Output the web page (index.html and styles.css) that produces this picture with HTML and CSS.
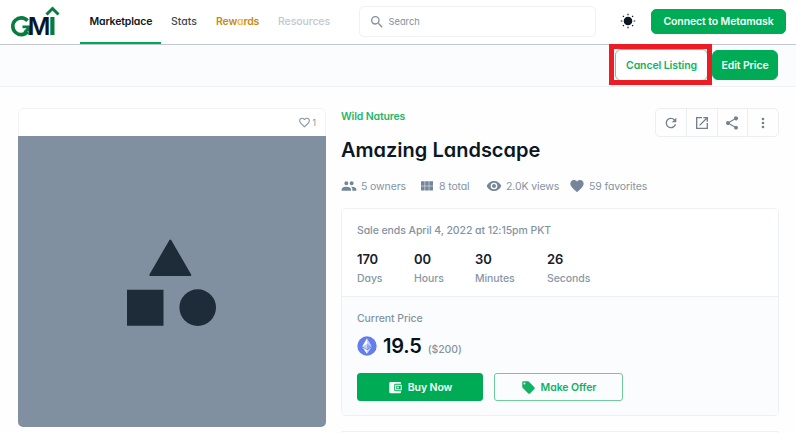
FILE: index.html
```html
<!DOCTYPE html>
<html lang="en">
<head>
<meta charset="utf-8">
<title>Amazing Landscape</title>
<link rel="stylesheet" href="styles.css">
</head>
<body>
<header class="topbar">
  <svg class="logo" width="50" height="34" viewBox="0 0 50 34">
    <path class="logo-ring" d="M16.500 14.700A8.400 8.400 0 1 0 16.500 25.800"/>
    <path class="logo-fill" d="M11.500 19.500h9v9.500h-3.200v-4l-3.300 2.500-1.500-2.200 3.200-3h-4.200z"/>
    <text class="logo-dark" x="16.800" y="29" textLength="22.700" lengthAdjust="spacingAndGlyphs">M</text>
    <path class="logo-fill" d="M39.300 11h4.200v18h-4.200z"/>
    <path class="logo-stroke" d="M35.500 8.500 41.500 2.500l6 6"/>
  </svg>
  <nav class="nav">
    <a class="nav-item active"><span>Marketplace</span></a>
    <a class="nav-item stats-link">Stats</a>
    <a class="nav-item rewards">Rew<span class="shine">a</span>rds</a>
    <a class="nav-item resources">Resources</a>
  </nav>
  <div class="search">
    <svg width="16" height="16" viewBox="0 0 24 24"><path d="M15.500 14h-.79l-.28-.27A6.470 6.470 0 0 0 16 9.500 6.500 6.500 0 1 0 9.500 16c1.610 0 3.090-.59 4.230-1.570l.27.28v.79l5 4.990L20.490 19zm-6 0a4.500 4.500 0 1 1 0-9 4.500 4.500 0 0 1 0 9z"/></svg>
    <span>Search</span>
  </div>
  <svg class="sun" width="16" height="16" viewBox="0 0 16 16"><circle cx="8" cy="8" r="3.700"/><path d="M8 .8v1.500M8 13.700v1.500M.8 8h1.500M13.700 8h1.500M2.900 2.900l1 1M12.100 12.100l1 1M2.900 13.100l1-1M12.100 3.900l1-1"/></svg>
  <button class="btn solid connect">Connect to Metamask</button>
</header>
<div class="actionbar">
  <div class="cancel-wrap"><button class="btn outline cancel">Cancel Listing</button><div class="highlight"></div></div>
  <button class="btn solid edit">Edit Price</button>
</div>
<main class="page">
  <section class="art">
    <div class="art-head">
      <svg width="13" height="13" viewBox="0 0 24 24"><path d="M16.500 3c-1.740 0-3.410.81-4.500 2.090C10.910 3.810 9.240 3 7.500 3 4.420 3 2 5.420 2 8.500c0 3.780 3.400 6.860 8.550 11.540L12 21.350l1.450-1.320C18.600 15.360 22 12.280 22 8.500 22 5.420 19.580 3 16.500 3zm-4.400 15.550-.1.100-.1-.1C7.140 14.240 4 11.390 4 8.500 4 6.500 5.500 5 7.500 5c1.540 0 3.040.99 3.570 2.360h1.870C13.460 5.990 14.960 5 16.500 5c2 0 3.500 1.500 3.500 3.500 0 2.890-3.140 5.740-7.900 10.050z"/></svg>
      <span>1</span>
    </div>
    <svg class="art-image" viewBox="0 0 308 291"><path d="M152.300 104.500 132.300 139h40z" stroke-width="2" stroke-linejoin="round"/><path d="M109 153.700h36.500v36H109z"/><circle cx="179.700" cy="171.600" r="18.300"/></svg>
  </section>
  <section class="detail">
    <div class="intro">
      <div>
        <div class="collection">Wild Natures</div>
        <h1>Amazing Landscape</h1>
      </div>
      <div class="tools">
        <span><svg width="16" height="16" viewBox="0 0 24 24"><path d="M17.650 6.350A7.960 7.960 0 0 0 12 4a8 8 0 1 0 7.730 10h-2.080A6 6 0 1 1 12 6c1.660 0 3.140.69 4.220 1.780L13 11h7V4z"/></svg></span>
        <span><svg width="16" height="16" viewBox="0 0 24 24"><path d="M19 19H5V5h7V3H3v18h18v-9h-2zM14 3v2h3.590l-9.830 9.830 1.410 1.410L19 6.410V10h2V3z"/></svg></span>
        <span><svg width="16" height="16" viewBox="0 0 24 24"><path d="M18 16.080c-.76 0-1.440.3-1.960.77L8.910 12.700a3 3 0 0 0 0-1.400l7.050-4.110A3 3 0 1 0 15 5c0 .24.040.47.090.7L8.040 9.810a3 3 0 1 0 0 4.380l7.120 4.160c-.05.21-.08.43-.08.650a2.920 2.920 0 1 0 2.920-2.920z"/></svg></span>
        <span><svg width="16" height="16" viewBox="0 0 24 24"><path d="M12 8a2 2 0 1 0 0-4 2 2 0 0 0 0 4zm0 2a2 2 0 1 0 0 4 2 2 0 0 0 0-4zm0 6a2 2 0 1 0 0 4 2 2 0 0 0 0-4z"/></svg></span>
      </div>
    </div>
    <div class="facts">
      <div class="fact owners"><svg width="16" height="16" viewBox="0 0 24 24"><path d="M16 11a3 3 0 1 0 0-6 3 3 0 0 0 0 6zm-8 0a3 3 0 1 0 0-6 3 3 0 0 0 0 6zm0 2c-2.330 0-7 1.170-7 3.500V19h14v-2.500C15 14.170 10.330 13 8 13zm8 0c-.29 0-.62.020-.97.050 1.160.84 1.970 1.970 1.970 3.450V19h6v-2.500c0-2.330-4.670-3.500-7-3.500z"/></svg><span>5 owners</span></div>
      <div class="fact total"><svg width="16" height="16" viewBox="0 0 24 24"><path d="M3 5h5.500v6.500H3zm6.200 0h5.500v6.500H9.200zm6.200 0H21v6.500h-5.600zM3 12.200h5.500v6.500H3zm6.200 0h5.500v6.500H9.200zm6.200 0H21v6.500h-5.600z"/></svg><span>8 total</span></div>
      <div class="fact views"><svg width="16" height="16" viewBox="0 0 24 24"><path d="M12 4.500C7 4.500 2.730 7.610 1 12c1.730 4.390 6 7.500 11 7.500s9.270-3.110 11-7.500c-1.730-4.390-6-7.500-11-7.500zM12 17a5 5 0 1 1 0-10 5 5 0 0 1 0 10zm0-8a3 3 0 1 0 0 6 3 3 0 0 0 0-6z"/></svg><span>2.0K views</span></div>
      <div class="fact favs"><svg width="16" height="16" viewBox="0 0 24 24"><path d="m12 21.350-1.450-1.320C5.400 15.360 2 12.280 2 8.500 2 5.420 4.420 3 7.500 3c1.740 0 3.410.81 4.500 2.090C13.090 3.810 14.760 3 16.500 3 19.580 3 22 5.420 22 8.500c0 3.780-3.400 6.860-8.550 11.540z"/></svg><span>59 favorites</span></div>
    </div>
    <div class="panel">
      <div class="countdown">
        <div class="ends">Sale ends April 4, 2022 at 12:15pm PKT</div>
        <div class="units">
          <div><b>170</b><span>Days</span></div>
          <div><b>00</b><span>Hours</span></div>
          <div><b>30</b><span>Minutes</span></div>
          <div><b>26</b><span>Seconds</span></div>
        </div>
      </div>
      <div class="price">
        <div class="label">Current Price</div>
        <div class="amount">
          <svg width="20" height="20" viewBox="0 0 20 20"><circle cx="10" cy="10" r="9.700" fill="#627eea"/><path d="M10 2.300 5.300 10.200 10 13z" fill="#fff"/><path d="M10 2.300 14.700 10.200 10 13z" fill="#c5cff8"/><path d="M10 8 5.300 10.200 10 13z" fill="#c5cff8"/><path d="m10 8 4.700 2.200L10 13z" fill="#94a6f1"/><path d="M10 14v3.800l-4.700-6.600z" fill="#fff"/><path d="M10 14v3.800l4.700-6.600z" fill="#c5cff8"/></svg>
          <strong>19.5</strong><span>($200)</span>
        </div>
        <div class="buttons">
          <button class="btn solid buy"><svg width="15" height="15" viewBox="0 0 24 24"><path d="M21 18v1a2 2 0 0 1-2 2H4a2 2 0 0 1-2-2V5a2 2 0 0 1 2-2h15a2 2 0 0 1 2 2v1h-9a2 2 0 0 0-2 2v8a2 2 0 0 0 2 2z"/><path d="M11.500 7.500H22v9H11.500zm1.700 1.700v5.600h7.100V9.200z" fill-rule="evenodd"/><circle cx="16" cy="12" r="1.600"/></svg><span>Buy Now</span></button>
          <button class="btn outline offer"><svg width="15" height="15" viewBox="0 0 24 24"><path d="m21.410 11.580-9-9A2 2 0 0 0 11 2H4a2 2 0 0 0-2 2v7c0 .55.220 1.050.59 1.420l9 9a2 2 0 0 0 2.820 0l7-7a2 2 0 0 0 0-2.840zM5.500 7a1.500 1.500 0 1 1 0-3 1.500 1.500 0 0 1 0 3z"/></svg><span>Make Offer</span></button>
        </div>
      </div>
    </div>
    <div class="next-panel"></div>
  </section>
</main>
</body>
</html>
```
FILE: styles.css
```css
* { box-sizing: border-box; }
body {
  margin: 0;
  background: #fefefe;
  color: #0b1724;
  font-family: Inter, "Liberation Sans", sans-serif;
  font-feature-settings: "cv11";
  font-size: 10.5px;
}
svg { display: block; flex: none; fill: currentColor; }
.topbar {
  display: flex;
  align-items: flex-start;
  height: 45px;
  padding-left: 11px;
  border-bottom: 1px solid #c3c7cb;
  background: #fff;
}
.logo { margin: 6px 19px 0 0; overflow: visible; font-size: 24.5px; font-weight: 600; }
.logo-fill { fill: #087c3e; }
.logo-dark { fill: #07172a; }
.logo-ring { fill: none; stroke: #087c3e; stroke-width: 3.600; }
.logo-stroke { fill: none; stroke: #087c3e; stroke-width: 3; }
.nav { display: flex; width: 279px; font-weight: 500; }
.nav-item { height: 44px; line-height: 43px; white-space: nowrap; }
.active { width: 81px; padding-left: 9.500px; border-bottom: 2px solid #00ab55; font-weight: 600; letter-spacing: -0.15px; }
.stats-link { width: 55px; padding-left: 10px; color: #3d4a59; }
.rewards { width: 62px; color: #c98a10; font-weight: 600; letter-spacing: -0.15px; }
.shine { color: #f3b83e; }
.resources { color: #c0c8d0; letter-spacing: -0.1px; }
.search {
  display: flex;
  align-items: center;
  width: 237px;
  height: 31px;
  margin-top: 6px;
  padding-left: 8.500px;
  gap: 4px;
  border: 1px solid #eff1f4;
  border-radius: 5px;
  color: #8190a0;
  font-size: 9.300px;
}
.sun { margin: 13px 15px 0 24px; stroke: #0b1724; stroke-width: 1.200; }
.btn {
  display: flex;
  align-items: center;
  justify-content: center;
  padding: 0;
  border: 1px solid #00ab55;
  border-radius: 5px;
  font: inherit;
  font-feature-settings: inherit;
  font-weight: 600;
  letter-spacing: -0.1px;
  white-space: nowrap;
}
.solid { background: #00ab55; color: #f3fff8; }
.outline { background: transparent; border-color: #6fcb9b; color: #12b163; }
.connect { width: 135px; height: 25px; margin-top: 9px; }
.actionbar {
  display: flex;
  justify-content: flex-end;
  height: 42px;
  padding-right: 18px;
  border-bottom: 1px solid #edf0f4;
  background: #fbfcfe;
}
.cancel-wrap { position: relative; margin: 4px 4px 0 0; }
.cancel { width: 93px; height: 32px; background: #fff; border-radius: 6px; }
.highlight { position: absolute; left: -6px; top: -5px; width: 103px; height: 41px; border: 5px solid #ed1c24; }
.edit { width: 66px; height: 30px; margin-top: 5px; border-radius: 6px; }
.page { display: flex; gap: 15px; padding: 21px 17px 0 18px; }
.art { width: 308px; height: 319px; border-radius: 5px; overflow: hidden; background: #fff; }
.art-head {
  display: flex;
  align-items: center;
  justify-content: flex-end;
  gap: 2px;
  height: 28px;
  padding-right: 9px;
  border: 1px solid #f0f2f4;
  border-bottom: 0;
  border-radius: 5px 5px 0 0;
  color: #8493a2;
  font-size: 8.500px;
}
.art-image { width: 308px; height: 291px; background: #8190a0; color: #1e2b38; stroke: currentColor; stroke-width: 0; }
.detail { width: 438px; }
.intro { display: flex; justify-content: space-between; height: 69px; }
.collection { height: 17px; line-height: 17px; color: #1fb66c; font-weight: 600; letter-spacing: -0.15px; }
h1 { margin: 11px 0 0; font-size: 20px; line-height: 28px; font-weight: 600; white-space: nowrap; }
.tools { display: flex; width: 124px; height: 29px; border: 1px solid #eceff2; border-radius: 5px; color: #74808e; }
.tools span { display: grid; place-items: center; flex: 1; }
.tools span + span { border-left: 1px solid #eceff2; }
.facts { display: flex; height: 18px; margin-bottom: 13px; color: #8594a3; letter-spacing: -0.12px; white-space: nowrap; }
.fact { display: flex; align-items: center; gap: 4px; }
.owners { width: 78px; }
.total { width: 67px; }
.views { width: 83px; }
.fact svg { color: #74879a; }
.panel { height: 208px; border: 1px solid #edf0f4; border-radius: 5px; overflow: hidden; }
.countdown { height: 88px; padding: 14px 15px 0; border-bottom: 1px solid #edf0f4; background: #fff; color: #8997a5; font-weight: 500; letter-spacing: -0.08px; }
.ends { line-height: 16px; color: #8493a2; }
.units { display: flex; margin-top: 11px; }
.units div { display: flex; flex-direction: column; }
.units div:nth-child(1) { width: 57px; }
.units div:nth-child(2) { width: 61px; }
.units div:nth-child(3) { width: 72px; }
.units b { color: #14202c; font-size: 13px; line-height: 18px; font-weight: 600; }
.units span { line-height: 21px; }
.price { height: 119px; padding: 14px 15px; background: #fbfcfe; color: #8594a3; font-weight: 500; letter-spacing: -0.08px; }
.label { line-height: 16px; }
.amount { display: flex; align-items: center; height: 26px; margin-top: 6px; }
.amount strong { margin: 0 6px 0 6px; color: #07111d; font-size: 20px; font-weight: 600; letter-spacing: -0.2px; }
.amount span { padding-top: 6px; }
.buttons { display: flex; gap: 11px; margin-top: 14px; }
.buttons .btn { height: 28px; border-radius: 3px; gap: 5px; }
.buy { width: 126px; }
.offer { width: 129px; }
.next-panel { height: 2px; margin-top: 15px; border: 1px solid #edf0f4; border-bottom: 0; border-radius: 5px 5px 0 0; }
```
